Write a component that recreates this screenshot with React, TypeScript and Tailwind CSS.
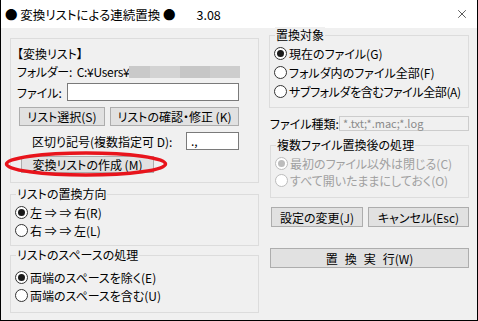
import { X } from 'lucide-react';

const font = '"Noto Sans CJK JP", "Noto Sans", sans-serif';

function Radio({ checked, disabled, label, tight }: { checked?: boolean; disabled?: boolean; label: string; tight?: boolean }) {
  return (
    <div className="flex items-center h-full">
      <span
        className={`w-[13px] h-[13px] rounded-full border bg-white flex items-center justify-center shrink-0 ${
          disabled ? 'border-[#bcbcbc]' : 'border-[#333333]'
        }`}
      >
        {checked && <span className={`w-[7px] h-[7px] rounded-full ${disabled ? 'bg-[#bcbcbc]' : 'bg-[#1a1a1a]'}`} />}
      </span>
      <span
        className={`ml-[2px] whitespace-nowrap ${tight ? 'tracking-[-0.4px]' : ''} ${
          disabled ? 'text-[#a0a0a0]' : 'text-black'
        }`}
      >
        {label}
      </span>
    </div>
  );
}

function Btn({ children, className }: { children: React.ReactNode; className: string }) {
  return (
    <div className={`bg-[#e1e1e1] border border-[#adadad] flex items-center justify-center whitespace-nowrap ${className}`}>
      {children}
    </div>
  );
}

function Group({ label, className, children }: { label?: string; className: string; children: React.ReactNode }) {
  return (
    <div className={`relative border border-[#dcdcdc] ${className}`}>
      {label && (
        <span className="absolute left-[5px] -top-[9px] px-[1px] bg-[#f0f0f0] leading-[16px] whitespace-nowrap">{label}</span>
      )}
      {children}
    </div>
  );
}

export default function App() {
  return (
    <div
      className="w-[478px] h-[321px] bg-[#f0f0f0] border-x border-b border-black flex flex-col text-[12px] leading-[15px] text-black overflow-hidden"
      style={{ fontFamily: font, fontFeatureSettings: '"palt"' }}
    >
      {/* title bar */}
      <div className="h-[28px] bg-white flex items-center shrink-0 pl-[4px] text-[12.5px] whitespace-nowrap">
        <span>● 変換リストによる連続置換 ●</span>
        <span className="ml-[21px]">3.08</span>
        <X className="ml-auto mr-[8px] w-[14px] h-[14px]" strokeWidth={1.1} />
      </div>

      <div className="flex pl-[9px] gap-[10px]">
        {/* left column */}
        <div className="w-[249px] flex flex-col">
          <Group className="mt-[10px] h-[145px] pt-[7px] pl-[6px]">
            <div className="h-[15px] whitespace-nowrap">【変換リスト】</div>
            <div className="w-[223px] h-[15px] mt-[3px] flex items-center whitespace-nowrap">
              <span className="tracking-[-0.3px]">フォルダー:&nbsp;&nbsp;C:¥Users¥</span>
              <div className="flex-1 flex h-[12px]">
                <div className="flex-1 bg-[#c9c9c9]" />
                <div className="w-[30px] bg-[#d3d3d3]" />
                <div className="w-[30px] bg-[#c6c6c6]" />
                <div className="w-[30px] bg-[#cdcdcd]" />
              </div>
            </div>
            <div className="h-[18px] mt-[4px] flex items-center">
              <span className="w-[50px] whitespace-nowrap">ファイル:</span>
              <div className="w-[172px] h-[18px] bg-white border border-[#7a7a7a]" />
            </div>
            <div className="flex mt-[6px] gap-[5px] ml-[2px]">
              <Btn className="w-[86px] h-[19px]">リスト選択(S)</Btn>
              <Btn className="w-[129px] h-[19px]">リストの確認・修正 (K)</Btn>
            </div>
            <div className="h-[18px] mt-[6px] flex items-center">
              <span className="ml-[15px] w-[154px] whitespace-nowrap">区切り記号(複数指定可 D):</span>
              <div className="w-[53px] h-[18px] bg-white border border-[#7a7a7a] flex items-center pl-[4px] leading-none">.,</div>
            </div>
            <div className="relative mt-[6px] ml-[4px] w-[133px]">
              <Btn className="w-[133px] h-[17px]">変換リストの作成 (M)</Btn>
              <svg className="absolute -left-[17px] -top-[7px]" width="166" height="30" viewBox="0 0 166 30">
                <ellipse cx="82" cy="15" rx="79.5" ry="11" fill="none" stroke="#e8141c" strokeWidth="3.5" />
              </svg>
            </div>
          </Group>

          <Group label="リストの置換方向" className="mt-[11px] h-[52px] pt-[8px] pl-[4px]">
            <div className="h-[18px]"><Radio checked label="左 ⇒ ⇒ 右(R)" /></div>
            <div className="h-[18px]"><Radio label="右 ⇒ ⇒ 左(L)" /></div>
          </Group>

          <Group label="リストのスペースの処理" className="mt-[9px] h-[58px] pt-[12px] pl-[4px]">
            <div className="h-[18px]"><Radio checked label="両端のスペースを除く(E)" /></div>
            <div className="h-[18px]"><Radio label="両端のスペースを含む(U)" /></div>
          </Group>
        </div>

        {/* right column */}
        <div className="w-[200px] flex flex-col">
          <Group label="置換対象" className="mt-[7px] h-[73px] pt-[8px] pl-[4px]">
            <div className="h-[19px]"><Radio checked label="現在のファイル(G)" /></div>
            <div className="h-[19px]"><Radio label="フォルダ内のファイル全部(F)" /></div>
            <div className="h-[19px]"><Radio tight label="サブフォルダを含むファイル全部(A)" /></div>
          </Group>

          <div className="mt-[8px] h-[15px] flex items-center">
            <span className="ml-[1px] w-[69px] whitespace-nowrap">ファイル種類:</span>
            <div className="w-[130px] h-[15px] border border-[#cccccc] bg-[#f0f0f0] text-[#8a8a8a] text-[11px] flex items-center pl-[3px] leading-none whitespace-nowrap">
              *.txt;*.mac;*.log
            </div>
          </div>

          <Group label="複数ファイル置換後の処理" className="mt-[14px] ml-[1px] h-[53px] pt-[9px] pl-[4px]">
            <div className="h-[17px]"><Radio checked disabled label="最初のファイル以外は閉じる(C)" /></div>
            <div className="h-[17px]"><Radio disabled label="すべて開いたままにしておく(O)" /></div>
          </Group>

          <div className="flex mt-[9px] ml-[2px] gap-[5px]">
            <Btn className="w-[92px] h-[20px]">設定の変更(J)</Btn>
            <Btn className="w-[101px] h-[20px]">キャンセル(Esc)</Btn>
          </div>

          <Btn className="mt-[21px] ml-[1px] w-[199px] h-[20px]">
            <span className="tracking-[7px]">置換実</span>
            <span>行(W)</span>
          </Btn>
        </div>
      </div>
    </div>
  );
}
